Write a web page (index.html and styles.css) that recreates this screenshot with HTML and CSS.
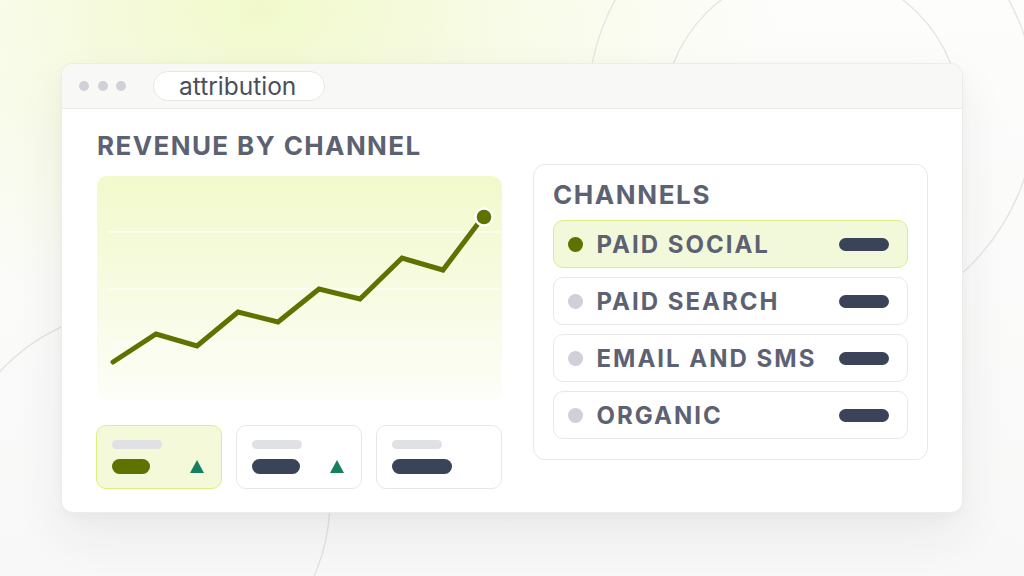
FILE: index.html
```html
<!DOCTYPE html>
<html lang="en">
<head>
<meta charset="utf-8">
<title>attribution</title>
<link rel="stylesheet" href="styles.css">
</head>
<body>
<div class="page">
  <svg class="decor" width="1024" height="576" viewBox="0 0 1024 576" aria-hidden="true">
    <circle cx="812" cy="107" r="224" fill="none" stroke="#e4e4e1" stroke-width="1.3"/>
    <circle cx="812" cy="118" r="149" fill="none" stroke="#e4e4e1" stroke-width="1.3"/>
    <circle cx="140" cy="500" r="190" fill="none" stroke="#e1e1de" stroke-width="1.3"/>
  </svg>

  <div class="window">
    <div class="titlebar">
      <div class="dots"><span></span><span></span><span></span></div>
      <div class="url">attribution</div>
    </div>
    <div class="content">
      <div class="left">
        <h1 class="heading">REVENUE BY CHANNEL</h1>
        <div class="chart">
          <svg width="405" height="224" viewBox="0 0 405 224">
            <line x1="12" y1="56" x2="403" y2="56" stroke="#ffffff" stroke-width="1.5" opacity="0.9"/>
            <line x1="12" y1="113" x2="403" y2="113" stroke="#ffffff" stroke-width="1.5" opacity="0.8"/>
            <line x1="12" y1="168" x2="403" y2="168" stroke="#ffffff" stroke-width="1.5" opacity="0.6"/>
            <polyline points="16,186 59,158 100,170 141,136 181,146 222,113 263,123 305,82 346,94 386,41" fill="none" stroke="#5e7200" stroke-width="5" stroke-linejoin="miter" stroke-linecap="round"/>
            <circle cx="387" cy="41" r="8.5" fill="#5e7200" stroke="#ffffff" stroke-width="2.5"/>
          </svg>
        </div>
        <div class="stats">
          <div class="stat active">
            <span class="stat-label"></span>
            <div class="stat-row">
              <span class="stat-value w38"></span>
              <span class="up"></span>
            </div>
          </div>
          <div class="stat">
            <span class="stat-label"></span>
            <div class="stat-row">
              <span class="stat-value w48"></span>
              <span class="up"></span>
            </div>
          </div>
          <div class="stat">
            <span class="stat-label"></span>
            <div class="stat-row">
              <span class="stat-value w60"></span>
            </div>
          </div>
        </div>
      </div>

      <div class="panel">
        <h2 class="heading">CHANNELS</h2>
        <ul class="channels">
          <li class="channel active"><span class="dot"></span><span class="name">PAID SOCIAL</span><span class="bar"></span></li>
          <li class="channel"><span class="dot"></span><span class="name">PAID SEARCH</span><span class="bar"></span></li>
          <li class="channel"><span class="dot"></span><span class="name">EMAIL AND SMS</span><span class="bar"></span></li>
          <li class="channel"><span class="dot"></span><span class="name">ORGANIC</span><span class="bar"></span></li>
        </ul>
      </div>
    </div>
  </div>
</div>
</body>
</html>
```

FILE: styles.css
```css
* { box-sizing: border-box; }

html, body {
  margin: 0;
  padding: 0;
  width: 1024px;
  height: 576px;
  overflow: hidden;
}

body {
  font-family: Inter, "Noto Sans", "Liberation Sans", sans-serif;
  background: #fafafa;
}

.page {
  position: relative;
  width: 1024px;
  height: 576px;
  padding: 63px 0 0 61px;
  background:
    radial-gradient(ellipse 520px 330px at 260px 10px, rgba(240, 249, 200, 0.95) 0%, rgba(244, 250, 215, 0.6) 45%, rgba(250, 250, 250, 0) 100%),
    linear-gradient(180deg, #fdfdfc 0%, #f8f8f8 100%);
}

.decor {
  position: absolute;
  left: 0;
  top: 0;
}

.window {
  position: relative;
  width: 902px;
  height: 450px;
  background: #ffffff;
  border: 1px solid #ececea;
  border-radius: 12px;
  box-shadow: 0 22px 50px rgba(40, 40, 50, 0.07), 0 4px 12px rgba(40, 40, 50, 0.03);
  overflow: hidden;
}

.titlebar {
  height: 45px;
  background: #f8f8f6;
  border-bottom: 1.5px solid #ebebe8;
  display: flex;
  align-items: center;
  padding-left: 17px;
}

.dots {
  display: flex;
  gap: 8.5px;
}

.dots span {
  width: 10px;
  height: 10px;
  border-radius: 50%;
  background: #d0d0d8;
}

.url {
  margin-left: 27px;
  height: 30px;
  width: 172px;
  border: 1.5px solid #e6e6e3;
  border-radius: 15px;
  background: #ffffff;
  padding-left: 25px;
  font-size: 24.5px;
  line-height: 28px;
  color: #4a4f5e;
  font-weight: 400;
}

.content {
  display: flex;
  gap: 31px;
  padding: 20px 0 0 35px;
}

.left {
  width: 405px;
  display: flex;
  flex-direction: column;
}

.heading {
  margin: 0;
  font-size: 26px;
  line-height: 34px;
  font-weight: 700;
  letter-spacing: 1.4px;
  color: #5d6273;
}

.chart {
  margin-top: 13px;
  width: 405px;
  height: 224px;
  border-radius: 10px;
  background: linear-gradient(180deg, #f2f9cb 0%, #f6fbdf 45%, #fdfef8 100%);
}

.chart svg { display: block; }

.stats {
  margin-top: 25px;
  display: flex;
  gap: 14px;
  margin-left: -1px;
}

.stat {
  width: 126px;
  height: 64px;
  border: 1.5px solid #e7e7e5;
  border-radius: 10px;
  background: #ffffff;
  padding: 13.5px 0 0 14.5px;
  display: flex;
  flex-direction: column;
  flex: none;
}

.stat.active {
  background: #f3f9d9;
  border-color: #ddf07e;
}

.stat-label {
  width: 50px;
  height: 9px;
  border-radius: 5px;
  background: #e0e1e4;
}

.stat-row {
  margin-top: 10px;
  display: flex;
  align-items: center;
}

.stat-value {
  height: 15px;
  border-radius: 8px;
  background: #3b4358;
}

.stat.active .stat-value { background: #5e7200; }

.w38 { width: 38px; }
.w48 { width: 48px; }
.w60 { width: 60px; }

.up {
  margin-left: auto;
  margin-right: 17px;
  width: 0;
  height: 0;
  border-left: 7.5px solid transparent;
  border-right: 7.5px solid transparent;
  border-bottom: 13px solid #15805d;
}

.panel {
  margin-top: 35px;
  width: 395px;
  height: 296px;
  border: 1.5px solid #e8e8e6;
  border-radius: 12px;
  padding: 13px 19px 0 19px;
}

.panel .heading {
  letter-spacing: 1.6px;
}

.channels {
  list-style: none;
  margin: 8px 0 0 0;
  padding: 0;
  display: flex;
  flex-direction: column;
  gap: 9px;
}

.channel {
  height: 48px;
  border: 1.5px solid #e8e8e6;
  border-radius: 10px;
  display: flex;
  align-items: center;
  padding: 0 18px 0 13.5px;
}

.channel.active {
  background: #f2f9da;
  border-color: #d9ef86;
}

.dot {
  width: 15px;
  height: 15px;
  border-radius: 50%;
  background: #cfd0d9;
  flex: none;
}

.channel.active .dot { background: #5e7200; }

.name {
  margin-left: 14px;
  font-size: 24px;
  line-height: 28px;
  padding-top: 2px;
  font-weight: 700;
  letter-spacing: 2px;
  color: #5d6273;
}

.bar {
  margin-left: auto;
  width: 50px;
  height: 13px;
  border-radius: 7px;
  background: #3b4358;
}
```
